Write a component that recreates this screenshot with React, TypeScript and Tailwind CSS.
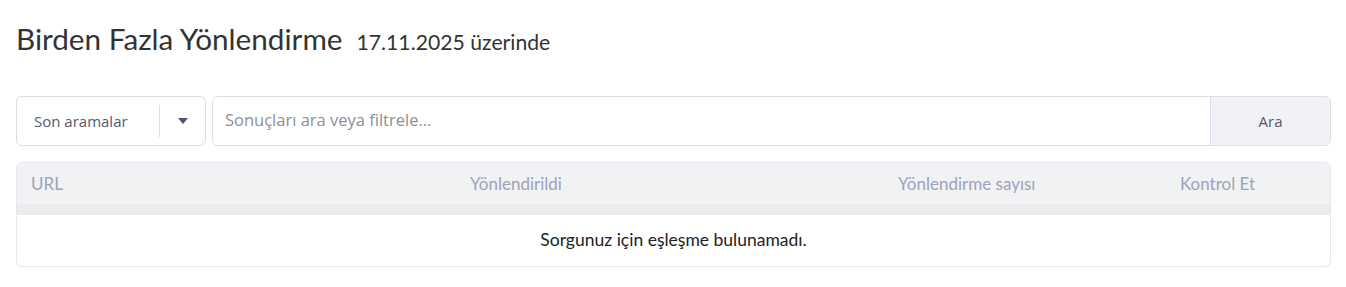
const columns = [
  { label: "URL", width: "w-[439px]" },
  { label: "Yönlendirildi", width: "w-[428px]" },
  { label: "Yönlendirme sayısı", width: "w-[282px]" },
  { label: "Kontrol Et", width: "flex-1" },
];

export default function App() {
  return (
    <div className="min-h-screen bg-white pl-4 pr-[15px] pt-[21px] font-['Lato',sans-serif] text-[#2b2b2b]">
      <div className="flex items-baseline gap-3.5">
        <h1 className="text-[29.7px] leading-9 text-[#333]">Birden Fazla Yönlendirme</h1>
        <span className="text-[21.2px] text-[#333]">17.11.2025 üzerinde</span>
      </div>

      <div className="mt-[37px] flex h-[50px] gap-[6px] font-['Open_Sans',sans-serif]">
        <div className="flex w-[190px] items-center rounded-md border border-[#dcdde6] bg-white">
          <span className="flex-1 pl-[17px] text-[15px] text-[#545a70]">Son aramalar</span>
          <div className="h-[32px] w-px bg-[#dcdde6]" />
          <div className="flex w-[45px] justify-center">
            <svg width="10" height="6" viewBox="0 0 10 6">
              <path d="M0 0h10L5 6z" fill="#4b5272" />
            </svg>
          </div>
        </div>
        <div className="flex flex-1 overflow-hidden rounded-md border border-[#dcdde6]">
          <input
            className="flex-1 bg-white pl-3 text-[16.5px] text-[#333] outline-none placeholder:text-[#8c8f99]"
            placeholder="Sonuçları ara veya filtrele..."
          />
          <button className="w-[120px] border-l border-[#dcdde6] bg-[#f1f2f5] text-[15px] text-[#555a6b]">
            Ara
          </button>
        </div>
      </div>

      <div className="mt-4 overflow-hidden rounded-md border border-[#e7e8ee]">
        <div className="flex h-[41px] items-center bg-[#f1f2f4] text-[17px] text-[#9ea3b8]">
          {columns.map((c) => (
            <div key={c.label} className={`${c.width} pl-[14px]`}>
              {c.label}
            </div>
          ))}
        </div>
        <div className="h-[11px] bg-[#ebecee]" />
        <div className="flex h-[51px] items-center justify-center text-[17.5px] text-[#222]">
          Sorgunuz için eşleşme bulunamadı.
        </div>
      </div>
    </div>
  );
}
